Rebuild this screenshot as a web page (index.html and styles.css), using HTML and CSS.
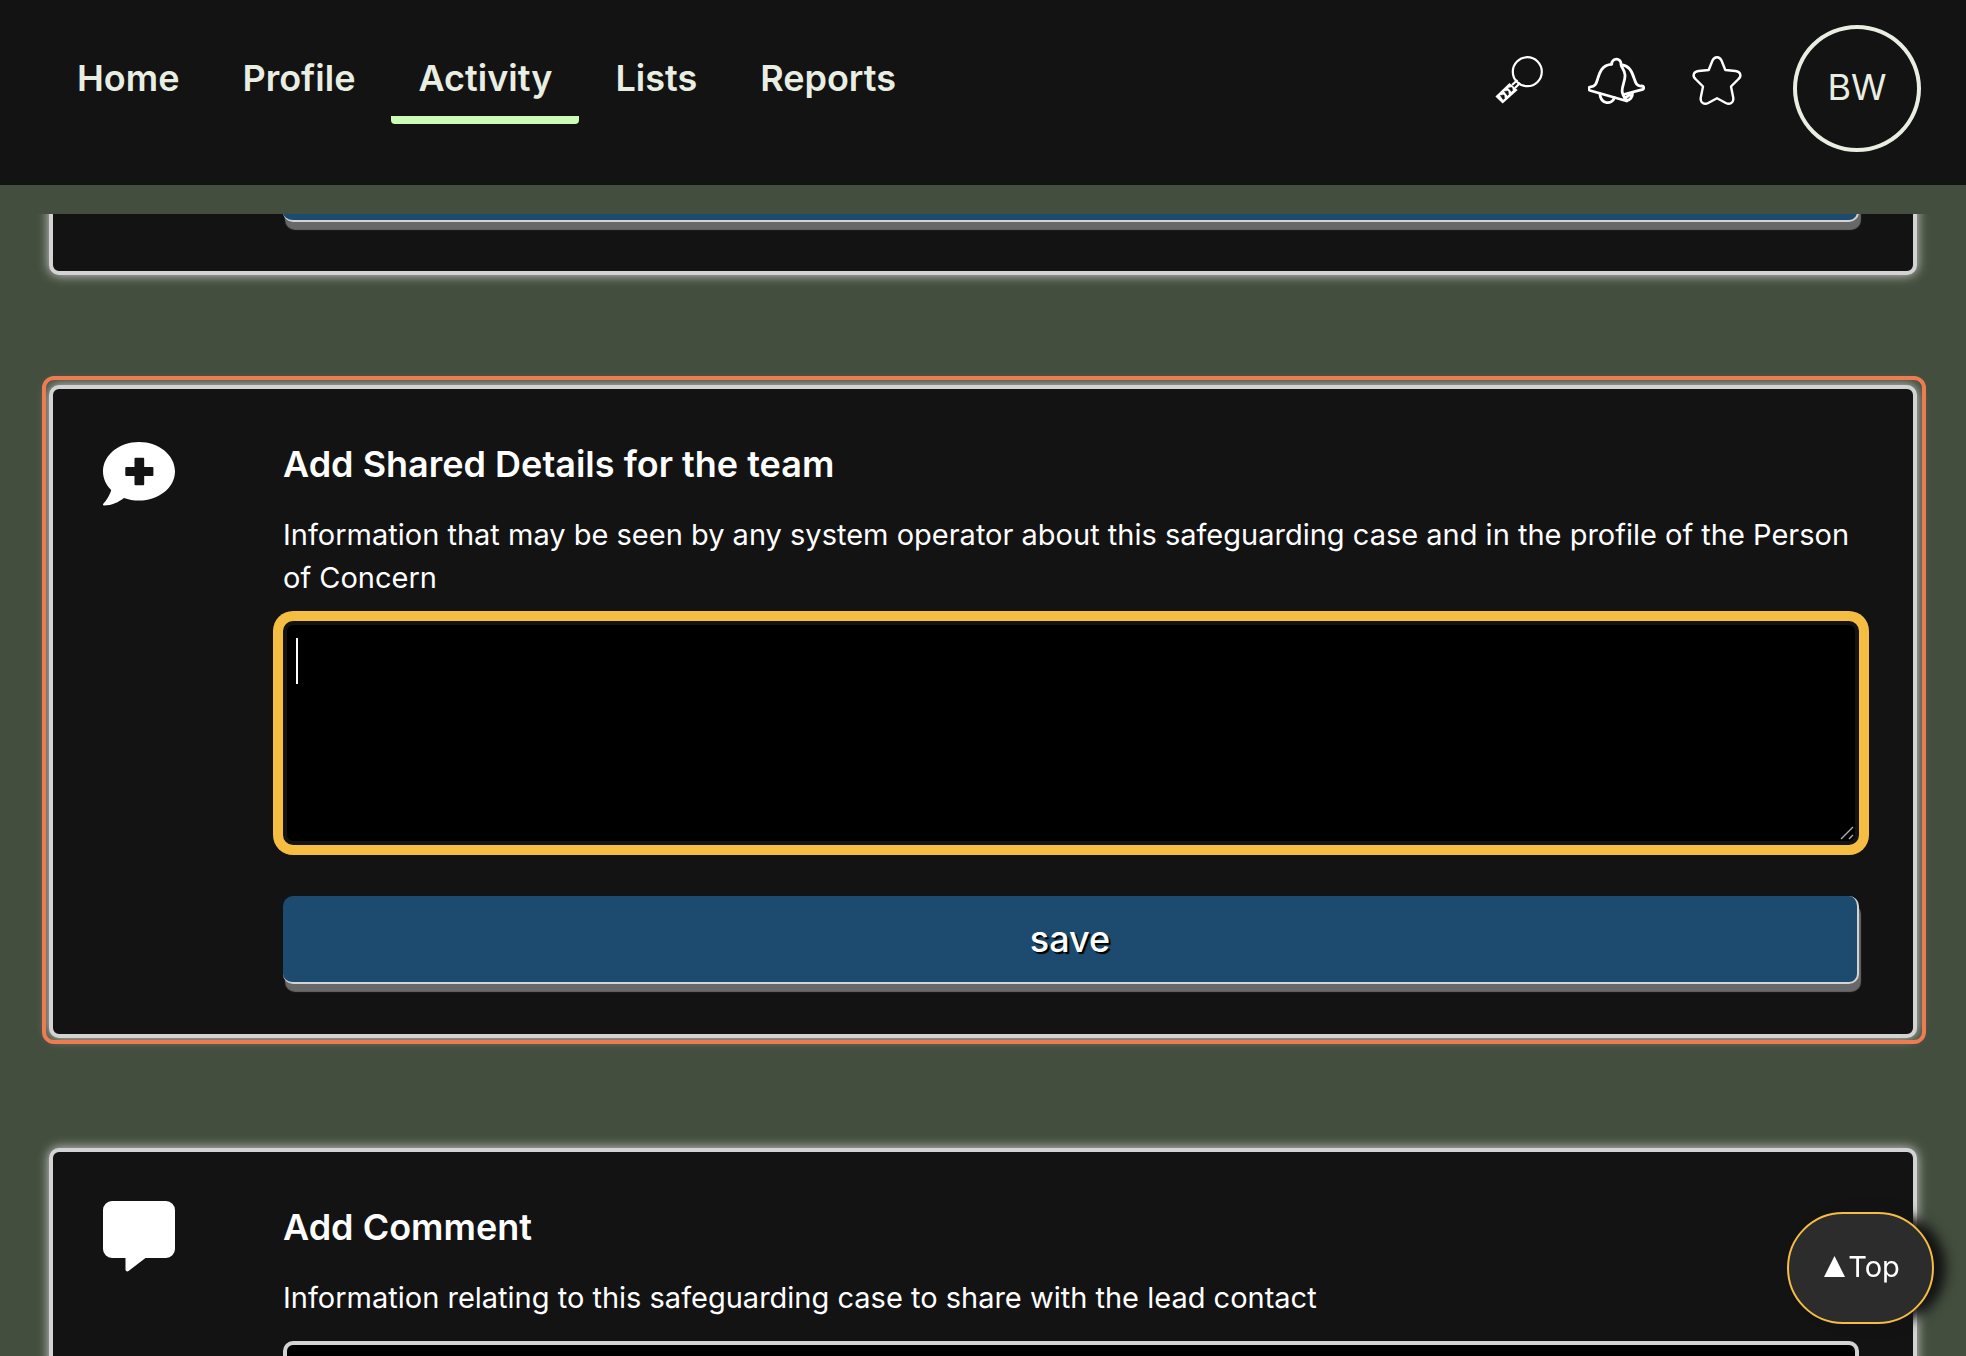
FILE: index.html
```html
<!DOCTYPE html>
<html lang="en">
<head>
<meta charset="utf-8">
<meta name="viewport" content="width=device-width, initial-scale=1">
<title>Activity</title>
<link rel="stylesheet" href="styles.css">
</head>
<body>
<header class="site-header">
  <nav class="main-nav">
    <a class="nav-link" href="#home">Home</a>
    <a class="nav-link" href="#profile">Profile</a>
    <a class="nav-link nav-link-current" href="#activity" aria-current="page">Activity</a>
    <a class="nav-link" href="#lists">Lists</a>
    <a class="nav-link" href="#reports">Reports</a>
  </nav>
  <div class="tools">
    <button class="tool" type="button" aria-label="Search">
      <svg class="tool-icon" viewBox="0 0 60 60" fill="none" stroke="#fff" stroke-width="2.200">
        <circle cx="38.300" cy="21.700" r="14.500"/>
        <path d="M23 35l5.500-5M26 38l5-5"/>
        <path d="M20.500 34.500l6.500 5.500-13.300 12L8 46.500z" fill="#fff"/>
        <path d="M11.500 45.500l3.500-.5.500 3.500-1.500 1zM15.500 41.500l3.500-.5.500 3.500-1 1zM19.500 38l3.500-.5.500 3-1 1z" fill="#131313" stroke="#131313" stroke-width=".600"/>
      </svg>
    </button>
    <button class="tool" type="button" aria-label="Notifications">
      <svg class="tool-icon" viewBox="0 0 60 60" fill="none" stroke="#fff" stroke-width="2.800" stroke-linejoin="round" stroke-linecap="round">
        <path d="M23.700 14.300C23.500 7.500 33.500 7.500 33 14.500c0 3 3.500 4.500 4 10.500.5 6-3.500 11.500-2.800 16.700.4 3.300 2 5.800 4.500 9.300L2 40.500c-2-.8-1.500-3.500.5-3.700 4.500-.3 5.500-2.300 7-7.300 1.600-5.500 4-15 14.200-15.200z"/>
        <path d="M33.500 15c8 0 11 8 12.500 13 1.500 4.500 2.500 8.500 7.500 8 2.500-.2 3 3 .5 3.700L35.500 44.500"/>
        <path d="M12 44.500c1 10 12 10.500 14.500 3M38.700 50.500c3.500-.3 6-3.500 5.800-7.500M37 48l6-4"/>
      </svg>
    </button>
    <button class="tool" type="button" aria-label="Favourites">
      <svg class="tool-icon" viewBox="0 0 60 60" fill="none" stroke="#fff" stroke-width="2.400" stroke-linejoin="round">
        <path d="M25.500 10.500c2-4.300 7-4.300 9 0L38.300 20l10.200 1c5 .5 6.500 5 3 8L44 36.500l2.300 11.500c.5 4.500-3.500 7-7.500 5L30 48.300 21.200 53c-4 2-8-.5-7.500-5L16 36.500 8.500 29c-3.500-3-2-7.500 3-8l10.200-1z"/>
      </svg>
    </button>
    <button class="avatar" type="button">BW</button>
  </div>
</header>

<main class="viewport">
  <div class="panel-list">
    <form class="panel panel-scrolled">
      <div class="card">
        <div class="card-body">
          <button class="save" type="button" aria-label="save"></button>
        </div>
      </div>
    </form>

    <form class="panel panel-active">
      <div class="card">
        <svg class="card-icon" viewBox="0 0 72 72" fill="#fff" aria-hidden="true">
          <path fill-rule="evenodd" d="M36 4C55.900 4 72 17.100 72 33.300S55.900 62.600 36 62.600c-5.400 0-10.500-.9-15.100-2.600C16 64 8.500 67.500 1 67.500c-1 0-1.300-1-.7-1.700C3 63 7 57 8.200 52 3 47 0 40.500 0 33.300 0 17.100 16.100 4 36 4zM32.500 19.700a1 1 0 0 0-1 1v8.200h-8.200a1 1 0 0 0-1 1v7.200a1 1 0 0 0 1 1h8.200v8.200a1 1 0 0 0 1 1h7.700a1 1 0 0 0 1-1v-8.200h8.200a1 1 0 0 0 1-1v-7.200a1 1 0 0 0-1-1h-8.200v-8.200a1 1 0 0 0-1-1z"/>
        </svg>
        <div class="card-body">
          <h2 class="card-title">Add Shared Details for the team</h2>
          <label class="card-text" for="shared-details">Information that may be seen by any system operator about this safeguarding case and in the profile of the Person of Concern</label>
          <div class="entry-focus">
            <textarea class="entry" id="shared-details"></textarea>
            <svg class="grip" viewBox="0 0 14 14" stroke="#b0b0b0" stroke-width="1.400" aria-hidden="true"><path d="M1 13 13 1M9 13l4-4"/></svg>
          </div>
          <button class="save" type="button">save</button>
        </div>
      </div>
    </form>

    <form class="panel">
      <div class="card">
        <svg class="card-icon" viewBox="0 0 72 72" fill="#fff" aria-hidden="true">
          <path d="M9 0h54a9 9 0 0 1 9 9v39a9 9 0 0 1-9 9H42.500L25.500 70c-1.200.9-3 .3-3-1.500V57H9a9 9 0 0 1-9-9V9a9 9 0 0 1 9-9z"/>
        </svg>
        <div class="card-body">
          <h2 class="card-title">Add Comment</h2>
          <label class="card-text" for="comment">Information relating to this safeguarding case to share with the lead contact</label>
          <textarea class="entry" id="comment"></textarea>
        </div>
      </div>
    </form>
  </div>
</main>

<a class="to-top" href="#top">
  <svg class="to-top-arrow" viewBox="0 0 21 21" fill="#fff" aria-hidden="true"><path d="M10.500 0 21 21H0z"/></svg>Top
</a>
</body>
</html>
```

FILE: styles.css
```css
* {
  box-sizing: border-box;
}

body {
  display: flex;
  flex-direction: column;
  gap: 29px;
  height: 100vh;
  margin: 0;
  overflow: hidden;
  background: #434e3e;
  color: #fff;
  font-family: Inter, "Liberation Sans", sans-serif;
  font-size: 29px;
}

button,
textarea {
  font-family: inherit;
}

/* Header */

.site-header {
  display: flex;
  flex: none;
  justify-content: space-between;
  align-items: flex-start;
  padding: 25px 45px 33px 50px;
  background: #131313;
}

.main-nav {
  display: flex;
  gap: 9px;
  padding-top: 8px;
}

.nav-link {
  padding: 23px 27px 15px;
  border-bottom: 8px solid transparent;
  border-radius: 0 0 4px 4px;
  color: #e8eee2;
  font-size: 36px;
  font-weight: 600;
  line-height: 45px;
  text-decoration: none;
}

.nav-link-current {
  border-bottom-color: #cdfcb6;
}

.tools {
  display: flex;
  align-items: flex-start;
  gap: 39px;
}

.tool {
  margin-top: 25px;
  padding: 0;
  border: 0;
  background: none;
}

.tool-icon {
  display: block;
  width: 60px;
  height: 60px;
}

.avatar {
  width: 128px;
  height: 127px;
  margin-left: 7px;
  padding: 0 0 4px;
  border: 4px solid #e8eee2;
  border-radius: 50%;
  background: none;
  color: #e8eee2;
  font-size: 36px;
}

/* Panels */

.viewport {
  flex: 1;
  min-height: 0;
  overflow: hidden;
}

.panel-list {
  display: flex;
  flex-direction: column;
  gap: 103px;
  margin-top: -89px;
  padding: 0 44px 0 46px;
}

.panel {
  padding: 5px 5px 2px 3px;
  border-radius: 8px;
}

.panel-active {
  outline: 4px solid #ee7c50;
}

.card {
  display: flex;
  gap: 108px;
  padding: 49px 54px 50px 50px;
  border: 4px solid #d3d3d3;
  border-radius: 10px;
  background: #131313;
  box-shadow: 0 0 12px #d3d3d3;
}

.panel-scrolled .card {
  padding: 0 54px 49px 230px;
}

.card-icon {
  flex: none;
  width: 72px;
  height: 72px;
}

.card-body {
  display: flex;
  flex: 1;
  flex-direction: column;
}

.card-title {
  margin: 0 0 23px;
  font-size: 36px;
  font-weight: 600;
  line-height: 52px;
}

.card-text {
  margin-bottom: 22px;
  line-height: 43px;
}

.entry {
  display: block;
  width: 100%;
  height: 224px;
  padding: 12px;
  border: 4px solid #d3d3d3;
  border-radius: 10px;
  outline: 0;
  background: #000;
  color: #fff;
  font-size: 36px;
  resize: none;
}

.entry-focus {
  position: relative;
  margin-bottom: 51px;
}

.entry-focus .entry {
  border-color: #131313;
  box-shadow: 0 0 0 10px #f5bd41;
  background: linear-gradient(#fff, #fff) 9px 13px / 2px 46px no-repeat #000;
}

.grip {
  position: absolute;
  right: 5px;
  bottom: 5px;
  width: 14px;
  height: 14px;
}

.save {
  height: 88px;
  padding: 0;
  border: 0 solid #d3d3d3;
  border-width: 0 2px 2px 0;
  border-radius: 10px;
  background: #1d4b6f;
  box-shadow: 2px 8px 1px #686868;
  color: #fff;
  font-size: 36px;
  font-weight: 500;
  text-shadow: 2px 2px 1px #000;
}

/* Floating link */

.to-top {
  position: fixed;
  right: 32px;
  bottom: 32px;
  display: flex;
  align-items: center;
  justify-content: center;
  gap: 3px;
  width: 147px;
  height: 112px;
  padding: 0 0 3px 3px;
  border: 2px solid #f5bd41;
  border-radius: 56px;
  background: #2c2c2c;
  box-shadow: 12px 0 12px #131313;
  color: #fff;
  text-decoration: none;
}

.to-top-arrow {
  width: 21px;
  height: 21px;
}
```
